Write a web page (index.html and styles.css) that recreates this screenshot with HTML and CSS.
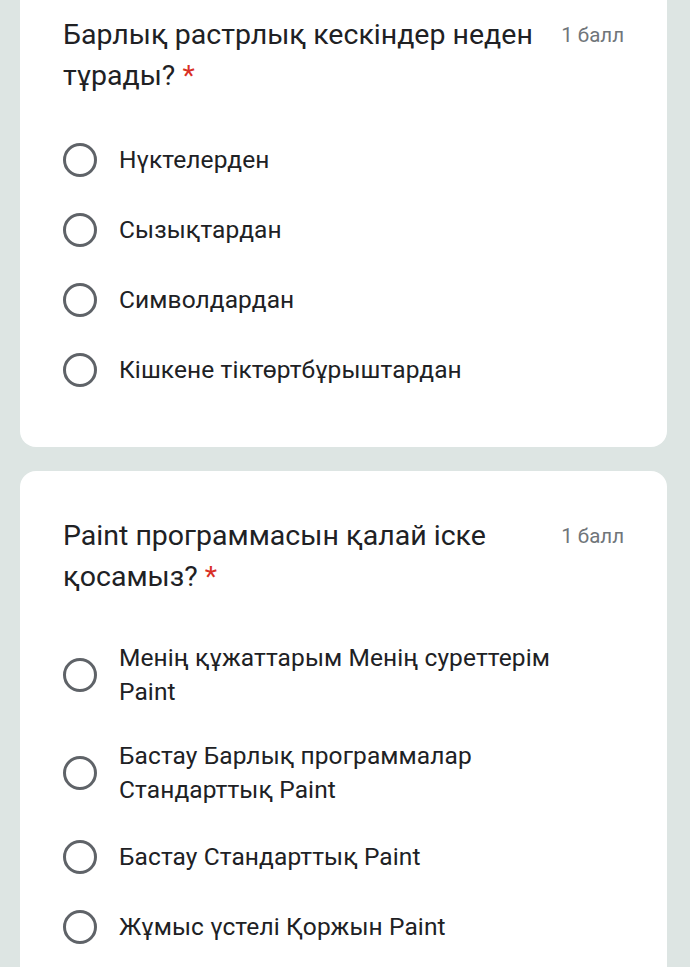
FILE: index.html
```html
<!doctype html>
<html lang="kk">
    <head>
        <meta charset="utf-8">
        <title>Сұрақтар</title>
        <link rel="stylesheet" href="styles.css">
    </head>

    <body>
        <div class = "page">
            <div class = "card first">
                <div class = "head">
                    <div class = "title">Барлық растрлық кескіндер неден тұрады? <span class = "req">*</span></div>
                    <div class = "points">1 балл</div>
                </div>
                <div class = "options">
                    <label class = "option"><span class = "radio"></span><span class = "text">Нүктелерден</span></label>
                    <label class = "option"><span class = "radio"></span><span class = "text">Сызықтардан</span></label>
                    <label class = "option"><span class = "radio"></span><span class = "text">Символдардан</span></label>
                    <label class = "option"><span class = "radio"></span><span class = "text">Кішкене тіктөртбұрыштардан</span></label>
                </div>
            </div>

            <div class = "card">
                <div class = "head">
                    <div class = "title">Paint программасын қалай іске қосамыз? <span class = "req">*</span></div>
                    <div class = "points">1 балл</div>
                </div>
                <div class = "options">
                    <label class = "option"><span class = "radio"></span><span class = "text">Менің құжаттарым Менің суреттерім Paint</span></label>
                    <label class = "option"><span class = "radio"></span><span class = "text">Бастау Барлық программалар Стандарттық Paint</span></label>
                    <label class = "option"><span class = "radio"></span><span class = "text">Бастау Стандарттық Paint</span></label>
                    <label class = "option"><span class = "radio"></span><span class = "text">Жұмыс үстелі Қоржын Paint</span></label>
                </div>
            </div>
        </div>
    </body>
</html>
```

FILE: styles.css
```css
html{
    font-family: Roboto, "Noto Sans", sans-serif;
}
body{
    margin: 0;
    background: #dde5e3;
    color: #202124;
    overflow: hidden;
}
.page{
    display: flex;
    flex-direction: column;
    gap: 24px;
    padding: 0 23px 0 20px;
}
.card{
    background: #ffffff;
    border-radius: 16px;
    padding: 44px 43px 42px 43px;
}
.first{
    margin-top: -30px;
}
.head{
    display: flex;
    align-items: flex-start;
}
.title{
    flex: 1;
    font-size: 28.5px;
    line-height: 41px;
}
.req{
    color: #d93025;
}
.points{
    margin-left: 22px;
    margin-top: 9px;
    font-size: 20.5px;
    color: #70757a;
    white-space: nowrap;
}
.options{
    display: flex;
    flex-direction: column;
    margin-top: 29px;
}
.option{
    display: flex;
    align-items: center;
    min-height: 40px;
    padding: 15px 24px 15px 0;
}
.radio{
    flex: none;
    box-sizing: border-box;
    width: 34px;
    height: 34px;
    border: 3px solid #5f6368;
    border-radius: 50%;
    margin-right: 22px;
}
.text{
    display: block;
    font-size: 24.5px;
    line-height: 34px;
    letter-spacing: 0.1px;
}
```
